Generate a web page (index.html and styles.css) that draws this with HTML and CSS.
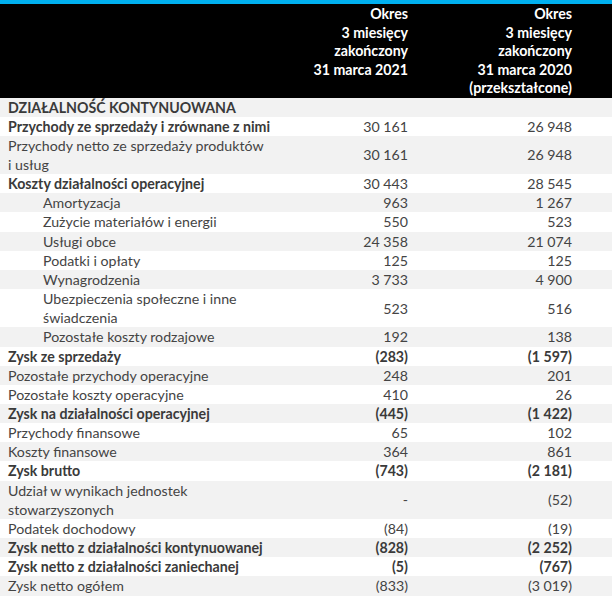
FILE: index.html
```html
<!DOCTYPE html>
<html lang="pl">
<head>
<meta charset="utf-8">
<link rel="stylesheet" href="styles.css">
</head>
<body>
<div class="topbar"></div>
<table class="fin">
  <colgroup>
    <col class="c-label">
    <col class="c-v1">
    <col class="c-v2">
  </colgroup>
  <thead>
    <tr>
      <th></th>
      <th class="h1">Okres<br>3 miesięcy<br>zakończony<br>31 marca 2021</th>
      <th class="h2">Okres<br>3 miesięcy<br>zakończony<br>31 marca 2020<br>(przekształcone)</th>
    </tr>
  </thead>
  <tbody>
    <tr class="b"><td>DZIAŁALNOŚĆ KONTYNUOWANA</td><td></td><td></td></tr>
    <tr class="b"><td>Przychody ze sprzedaży i zrównane z nimi</td><td>30 161</td><td>26 948</td></tr>
    <tr><td>Przychody netto ze sprzedaży produktów<br>i usług</td><td>30 161</td><td>26 948</td></tr>
    <tr class="b"><td>Koszty działalności operacyjnej</td><td>30 443</td><td>28 545</td></tr>
    <tr class="i"><td>Amortyzacja</td><td>963</td><td>1 267</td></tr>
    <tr class="i"><td>Zużycie materiałów i energii</td><td>550</td><td>523</td></tr>
    <tr class="i"><td>Usługi obce</td><td>24 358</td><td>21 074</td></tr>
    <tr class="i"><td>Podatki i opłaty</td><td>125</td><td>125</td></tr>
    <tr class="i"><td>Wynagrodzenia</td><td>3 733</td><td>4 900</td></tr>
    <tr class="i"><td>Ubezpieczenia społeczne i inne<br>świadczenia</td><td>523</td><td>516</td></tr>
    <tr class="i"><td>Pozostałe koszty rodzajowe</td><td>192</td><td>138</td></tr>
    <tr class="b bv"><td>Zysk ze sprzedaży</td><td>(283)</td><td>(1 597)</td></tr>
    <tr><td>Pozostałe przychody operacyjne</td><td>248</td><td>201</td></tr>
    <tr><td>Pozostałe koszty operacyjne</td><td>410</td><td>26</td></tr>
    <tr class="b bv"><td>Zysk na działalności operacyjnej</td><td>(445)</td><td>(1 422)</td></tr>
    <tr><td>Przychody finansowe</td><td>65</td><td>102</td></tr>
    <tr><td>Koszty finansowe</td><td>364</td><td>861</td></tr>
    <tr class="b bv"><td>Zysk brutto</td><td>(743)</td><td>(2 181)</td></tr>
    <tr><td>Udział w wynikach jednostek<br>stowarzyszonych</td><td>-</td><td>(52)</td></tr>
    <tr><td>Podatek dochodowy</td><td>(84)</td><td>(19)</td></tr>
    <tr class="b bv"><td>Zysk netto z działalności kontynuowanej</td><td>(828)</td><td>(2 252)</td></tr>
    <tr class="b bv"><td>Zysk netto z działalności zaniechanej</td><td>(5)</td><td>(767)</td></tr>
    <tr><td>Zysk netto ogółem</td><td>(833)</td><td>(3 019)</td></tr>
  </tbody>
</table>
</body>
</html>
```

FILE: styles.css
```css
html, body {
  margin: 0;
  padding: 0;
  background: #ffffff;
}

body {
  font-family: "Lato", "Liberation Sans", sans-serif;
  font-size: 14.2px;
  color: #444444;
  width: 612px;
}

.topbar {
  height: 4px;
  background: #00b0f0;
}

.fin {
  width: 612px;
  border-collapse: collapse;
  border-spacing: 0;
  table-layout: fixed;
}

.c-label { width: 300px; }
.c-v1 { width: 112px; }
.c-v2 { width: 200px; }

.fin thead tr {
  background: #000000;
}

.fin th {
  color: #ffffff;
  font-weight: 700;
  text-align: right;
  line-height: 18.5px;
  padding: 1px 0 0 0;
  vertical-align: top;
}

.fin th.h1 { padding-right: 4px; }
.fin th.h2 { padding-right: 40px; }

.fin td {
  padding: 0;
  line-height: 19.15px;
  vertical-align: middle;
  white-space: nowrap;
}

.fin td:first-child {
  padding-left: 8px;
}

.fin td:nth-child(2) {
  text-align: right;
  padding-right: 4px;
}

.fin td:nth-child(3) {
  text-align: right;
  padding-right: 40px;
}

.fin tbody tr:nth-child(odd) {
  background: #f2f2f2;
}

.fin tr.b td:first-child {
  font-weight: 700;
  color: #3a3a3a;
}

.fin tr.bv td {
  font-weight: 700;
  color: #3a3a3a;
}

.fin tr.i td:first-child {
  padding-left: 43px;
}
```
